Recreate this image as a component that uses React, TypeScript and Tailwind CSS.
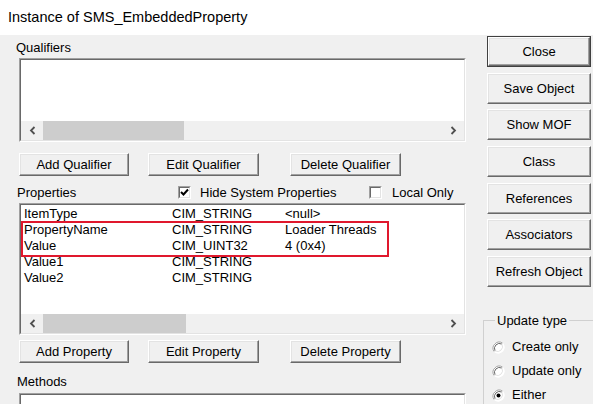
import React from "react";

interface BtnProps {
  label: string;
  className?: string;
  isDefault?: boolean;
}

const Btn: React.FC<BtnProps> = ({ label, className = "", isDefault = false }) => {
  const face = (
    <div className="flex h-full w-full items-center justify-center border border-t-white border-l-white border-r-[#696969] border-b-[#696969] bg-[#f0f0f0] shadow-[inset_-1px_-1px_0_#a0a0a0,inset_1px_1px_0_#e3e3e3]">
      {label}
    </div>
  );
  if (isDefault) {
    return <div className={`border border-[#404040] ${className}`}>{face}</div>;
  }
  return <div className={className}>{face}</div>;
};

const Chevron: React.FC<{ dir: "left" | "right" }> = ({ dir }) => (
  <svg width="7" height="9" viewBox="0 0 7 9">
    <polyline
      points={dir === "left" ? "5.5,1 2,4.5 5.5,8" : "1.5,1 5,4.5 1.5,8"}
      fill="none"
      stroke="#505050"
      strokeWidth="1.8"
    />
  </svg>
);

const HScroll: React.FC<{ thumb: string }> = ({ thumb }) => (
  <div className="flex h-[19px] bg-[#f0f0f0]">
    <div className="flex w-[22px] items-center justify-center">
      <Chevron dir="left" />
    </div>
    <div className={`h-full bg-[#cdcdcd] ${thumb}`} />
    <div className="flex-1" />
    <div className="flex w-[22px] items-center justify-center">
      <Chevron dir="right" />
    </div>
  </div>
);

const ListBox: React.FC<{
  className?: string;
  thumb?: string;
  children?: React.ReactNode;
  scroll?: boolean;
}> = ({ className = "", thumb = "w-[141px]", children, scroll = true }) => (
  <div
    className={`relative w-[447px] border border-t-[#a0a0a0] border-l-[#a0a0a0] border-r-white border-b-white ${className}`}
  >
    <div className="flex h-full flex-col border border-t-[#696969] border-l-[#696969] border-r-[#e3e3e3] border-b-[#e3e3e3] bg-white">
      <div className="flex-1 overflow-hidden">{children}</div>
      {scroll && <HScroll thumb={thumb} />}
    </div>
  </div>
);

const CheckBox: React.FC<{ checked?: boolean }> = ({ checked = false }) => (
  <div className="h-[13px] w-[13px] border border-t-[#a0a0a0] border-l-[#a0a0a0] border-r-white border-b-white">
    <div className="flex h-full w-full items-center justify-center border border-t-[#696969] border-l-[#696969] border-r-[#e3e3e3] border-b-[#e3e3e3] bg-white">
      {checked && (
        <svg width="9" height="9" viewBox="0 0 9 9">
          <polyline points="1,4 3.5,6.5 8,1.5" fill="none" stroke="#000" strokeWidth="2" />
        </svg>
      )}
    </div>
  </div>
);

const Radio: React.FC<{ checked?: boolean }> = ({ checked = false }) => (
  <svg width="13" height="13" viewBox="0 0 13 13">
    <circle cx="6.5" cy="6.5" r="6" fill="#ffffff" />
    <path d="M10.7 2.3 A6 6 0 0 0 2.3 10.7" fill="none" stroke="#a0a0a0" strokeWidth="1" />
    <path d="M9.9 3.1 A5 5 0 0 0 3.1 9.9" fill="none" stroke="#696969" strokeWidth="1" />
    <path d="M2.3 10.7 A6 6 0 0 0 10.7 2.3" fill="none" stroke="#ffffff" strokeWidth="1" />
    <path d="M3.1 9.9 A5 5 0 0 0 9.9 3.1" fill="none" stroke="#e3e3e3" strokeWidth="1" />
    {checked && <circle cx="6.5" cy="6.5" r="2" fill="#000" />}
  </svg>
);

const properties = [
  { name: "ItemType", type: "CIM_STRING", value: "<null>" },
  { name: "PropertyName", type: "CIM_STRING", value: "Loader Threads" },
  { name: "Value", type: "CIM_UINT32", value: "4 (0x4)" },
  { name: "Value1", type: "CIM_STRING", value: "" },
  { name: "Value2", type: "CIM_STRING", value: "" },
];

const sideButtons = [
  { label: "Close", mt: "mt-[1px]", isDefault: true },
  { label: "Save Object", mt: "mt-[6px]" },
  { label: "Show MOF", mt: "mt-[5px]" },
  { label: "Class", mt: "mt-[6px]" },
  { label: "References", mt: "mt-[6px]" },
  { label: "Associators", mt: "mt-[5px]" },
  { label: "Refresh Object", mt: "mt-[6px]" },
];

const App: React.FC = () => {
  return (
    <div className="h-[404px] w-[593px] overflow-hidden bg-[#f0f0f0] font-['Liberation_Sans',Arial,sans-serif] text-[13px] text-black">
      <div className="flex h-[35px] items-center bg-white pl-[8px] text-[14.5px]">
        Instance of SMS_EmbeddedProperty
      </div>

      <div className="flex">
        {/* left column */}
        <div className="w-[483px] shrink-0 pl-[19px]">
          <div className="-ml-[3px] mt-[4px] h-[17px] leading-[17px]">Qualifiers</div>
          <ListBox className="mt-[2px] h-[84px]" />

          <div className="mt-[11px] flex h-[23px]">
            <Btn label="Add Qualifier" className="w-[110px]" />
            <Btn label="Edit Qualifier" className="ml-[19px] w-[111px]" />
            <Btn label="Delete Qualifier" className="ml-[31px] w-[111px]" />
          </div>

          <div className="mt-[8px] flex h-[17px] items-center leading-[17px]">
            <div className="-ml-[2px] w-[161px]">Properties</div>
            <CheckBox checked />
            <div className="ml-[9px] w-[169px]">Hide System Properties</div>
            <CheckBox />
            <div className="ml-[10px]">Local Only</div>
          </div>

          <ListBox className="mt-[2px] h-[132px]" thumb="w-[143px]">
            <div className="pt-[1px]">
              {properties.map((p) => (
                <div key={p.name} className="flex h-[16px] pl-[3px] leading-[16px]">
                  <div className="w-[148px]">{p.name}</div>
                  <div className="w-[113px]">{p.type}</div>
                  <div>{p.value}</div>
                </div>
              ))}
            </div>
            <div className="pointer-events-none absolute left-[1px] top-[17px] h-[36px] w-[368px] border-2 border-[#e0182d]" />
          </ListBox>

          <div className="mt-[5px] flex h-[23px]">
            <Btn label="Add Property" className="w-[110px]" />
            <Btn label="Edit Property" className="ml-[19px] w-[111px]" />
            <Btn label="Delete Property" className="ml-[31px] w-[111px]" />
          </div>

          <div className="-ml-[2px] mt-[10px] h-[17px] leading-[17px]">Methods</div>
          <ListBox className="mt-[3px] h-[60px]" scroll={false} />
        </div>

        {/* right column */}
        <div className="w-[140px] shrink-0">
          {sideButtons.map((b) => (
            <Btn
              key={b.label}
              label={b.label}
              isDefault={b.isDefault}
              className={`ml-[4px] h-[31px] w-[104px] ${b.mt}`}
            />
          ))}

          <fieldset className="mt-[25px] h-[120px] w-[140px] border border-[#d0d0d0] pl-[8px]">
            <legend className="ml-[3px] px-[2px] leading-[17px]">Update type</legend>
            <div className="mt-[6px] flex flex-col">
              {["Create only", "Update only", "Either"].map((r, i) => (
                <div key={r} className="flex h-[24px] items-center">
                  <Radio checked={i === 2} />
                  <span className="ml-[7px]">{r}</span>
                </div>
              ))}
            </div>
          </fieldset>
        </div>
      </div>
    </div>
  );
};

export default App;
